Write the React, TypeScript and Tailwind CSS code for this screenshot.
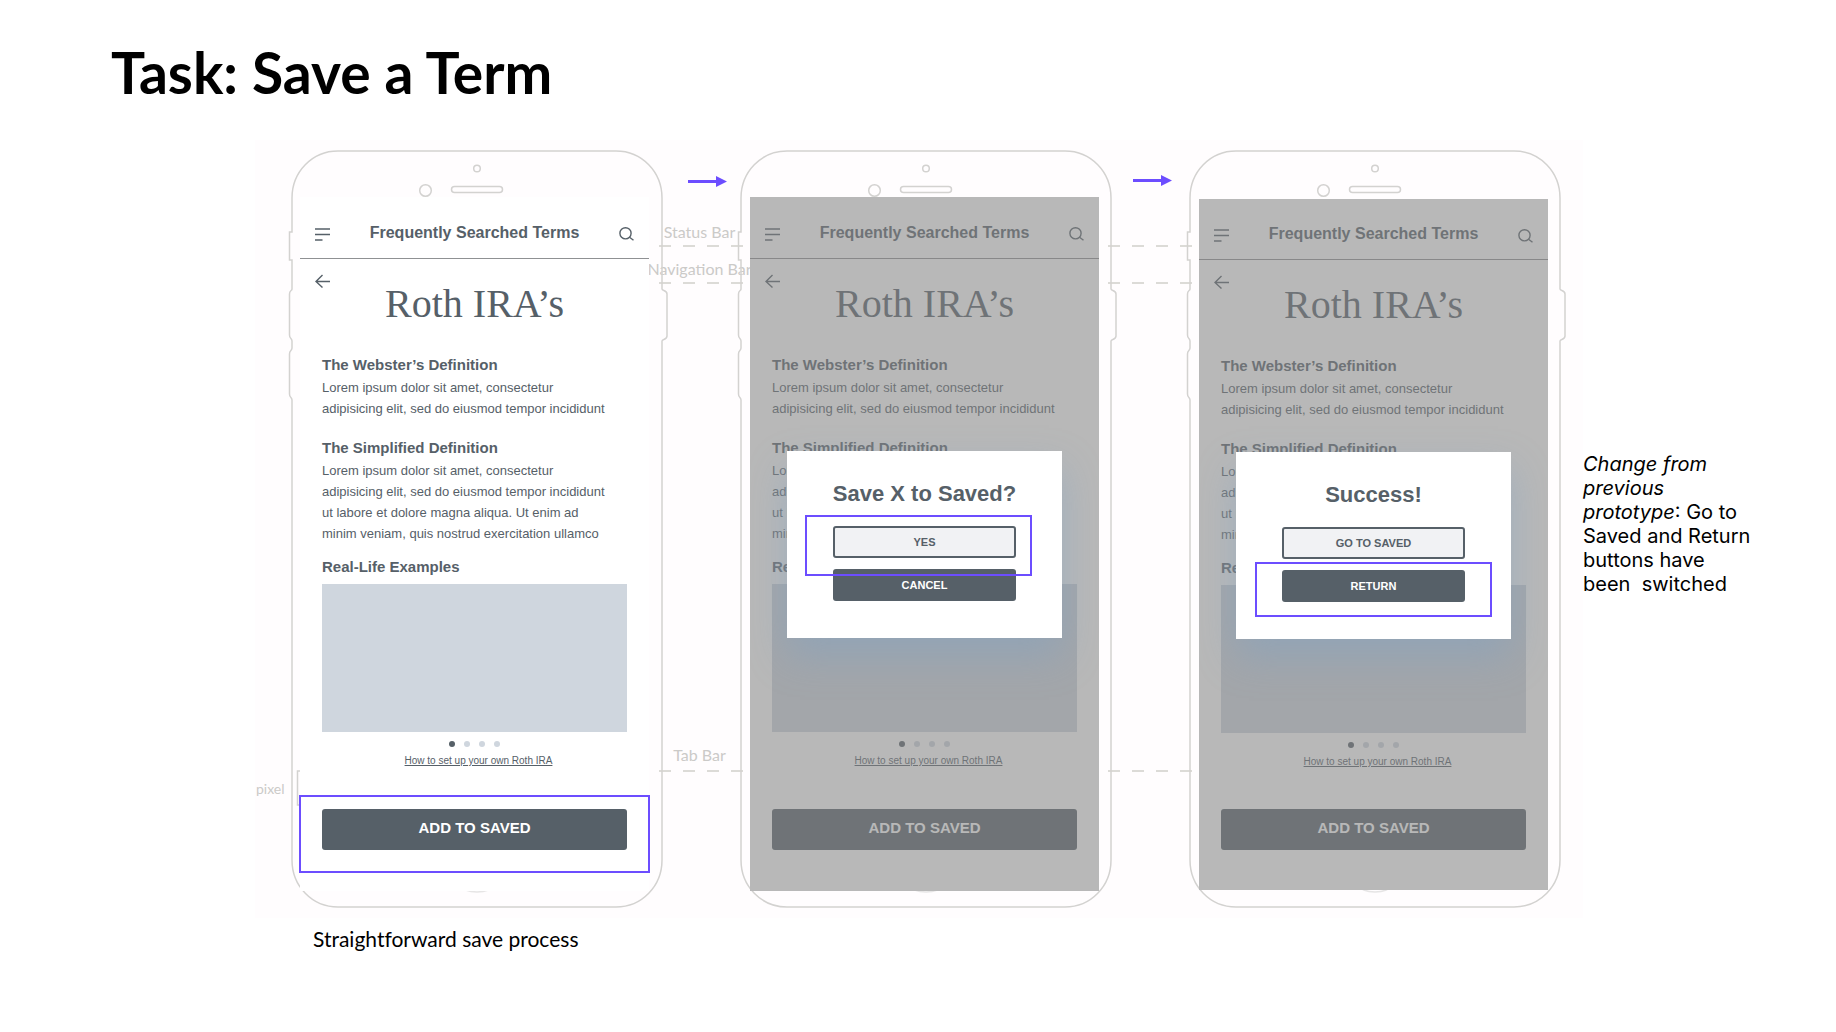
import type { ReactNode } from 'react'
import clsx from 'clsx'

const HIGHLIGHT = 'pointer-events-none absolute border-2 border-[#6c4dff]'

function PhoneFrame({ bracket }: { bracket?: boolean }) {
  return (
    <svg
      className="absolute left-0 top-0 overflow-visible"
      width="372"
      height="758"
      viewBox="0 0 372 758"
      fill="none"
      stroke="#d3d2d0"
      strokeWidth="1.5"
      aria-hidden="true"
    >
      <path d="M47 1H325C351 1 371 22 371 48V139C371 141 376 140 376 144V186C376 190 371 189 371 191V710C371 736 351 757 325 757H47C21 757 1 736 1 710V250C1 247 -1.500 248 -1.500 244V204C-1.500 200 1 201 1 198V191C1 188 -1.500 189 -1.500 185V144C-1.500 140 1 141 1 139V110H-1.500V82H1V48C1 22 21 1 47 1Z" />
      <circle cx="186" cy="18.500" r="3.300" />
      <circle cx="134.500" cy="40.500" r="5.800" />
      <rect x="160.500" y="36.500" width="51" height="6" rx="3" />
      <circle cx="186" cy="712" r="30" stroke="#e6e5e5" />
      {bracket && <path d="M10 621H6.500V655H10" />}
    </svg>
  )
}

function MenuIcon() {
  return (
    <svg width="15" height="13" viewBox="0 0 15 13" stroke="currentColor" strokeWidth="1.400" aria-hidden="true">
      <path d="M0 1H15M0 6.500H15M0 12H7.500" />
    </svg>
  )
}

function SearchIcon() {
  return (
    <svg width="15" height="14" viewBox="0 0 15 14" fill="none" stroke="currentColor" strokeWidth="1.400" aria-hidden="true">
      <circle cx="6.500" cy="6.300" r="5.600" />
      <path d="M10.500 10.300L14.500 13.300" />
    </svg>
  )
}

function BackIcon() {
  return (
    <svg width="15" height="14" viewBox="0 0 15 14" fill="none" stroke="currentColor" strokeWidth="1.400" aria-hidden="true">
      <path d="M15 7.500H1M7.500 1L1 7.500L7.500 13.500" />
    </svg>
  )
}

function ArrowRight() {
  return (
    <svg width="39" height="11" viewBox="0 0 39 11" fill="#6c4dff" aria-hidden="true">
      <path d="M0 4H28V0L39 5.500L28 11V7H0Z" />
    </svg>
  )
}

function SectionTitle({ className, children }: { className?: string; children: ReactNode }) {
  return <h3 className={clsx('text-[15px] leading-5 font-bold', className)}>{children}</h3>
}

function Phone({
  bracket,
  screenClass,
  headerClass,
  overlayClass,
  highlightAdd,
  dialog,
}: {
  bracket?: boolean
  screenClass: string
  headerClass: string
  overlayClass?: string
  highlightAdd?: boolean
  dialog?: ReactNode
}) {
  return (
    <article className="relative h-[758px] w-[372px] shrink-0">
      <PhoneFrame bracket={bracket} />
      <div className={clsx('relative z-10 flex w-[349px] flex-col bg-white text-[#566068]', screenClass)}>
        <header className={clsx('flex items-center justify-between border-b border-[#8f9193] px-[15px] pt-[10px]', headerClass)}>
          <button aria-label="Menu" className="pt-[3px]">
            <MenuIcon />
          </button>
          <span className="text-base leading-5 font-bold">Frequently Searched Terms</span>
          <button aria-label="Search" className="pt-[3px]">
            <SearchIcon />
          </button>
        </header>
        <button aria-label="Back" className="mt-[15px] ml-[15px] self-start">
          <BackIcon />
        </button>
        <div className="flex grow flex-col px-[22px]">
          <h2 className="text-center font-['Liberation_Serif',serif] text-[40px] leading-8">Roth IRA’s</h2>
          <SectionTitle className="mt-[35px]">The Webster’s Definition</SectionTitle>
          <p className="mt-[2px] text-[13px] leading-[21px]">
            Lorem ipsum dolor sit amet, consectetur
            <br />
            adipisicing elit, sed do eiusmod tempor incididunt
          </p>
          <SectionTitle className="mt-[19px]">The Simplified Definition</SectionTitle>
          <p className="mt-[2px] text-[13px] leading-[21px]">
            Lorem ipsum dolor sit amet, consectetur
            <br />
            adipisicing elit, sed do eiusmod tempor incididunt
            <br />
            ut labore et dolore magna aliqua. Ut enim ad
            <br />
            minim veniam, quis nostrud exercitation ullamco
          </p>
          <SectionTitle className="mt-[13px]">Real-Life Examples</SectionTitle>
          <div className="mt-[7px] h-[148px] bg-[#cfd6de]" />
          <div className="mt-[9px] flex justify-center gap-[9px]">
            <span className="size-[6px] rounded-full bg-[#566068]" />
            <span className="size-[6px] rounded-full bg-[#cfd6de]" />
            <span className="size-[6px] rounded-full bg-[#cfd6de]" />
            <span className="size-[6px] rounded-full bg-[#cfd6de]" />
          </div>
          <a href="#roth-ira" className="mt-[7px] ml-2 self-center text-[10px] leading-[14px] underline">
            How to set up your own Roth IRA
          </a>
          <div className="relative mt-auto">
            <button className="h-[41px] w-full rounded-[3px] bg-[#566068] pb-[3px] text-[15px] leading-5 font-bold text-white">
              ADD TO SAVED
            </button>
            {highlightAdd && <span className={clsx(HIGHLIGHT, '-inset-x-[23px] -top-[14px] -bottom-[23px]')} />}
          </div>
        </div>
        {dialog && (
          <div className={clsx('absolute inset-0 flex items-start justify-center overflow-hidden bg-[#828282]/57', overlayClass)}>
            {dialog}
          </div>
        )}
      </div>
    </article>
  )
}

function Dialog({
  title,
  primary,
  secondary,
  primaryMark,
  secondaryMark,
}: {
  title: string
  primary: string
  secondary: string
  primaryMark?: string
  secondaryMark?: string
}) {
  return (
    <div
      role="dialog"
      aria-label={title}
      className="w-[275px] bg-white px-[46px] pt-[31px] pb-[37px] shadow-[0_18px_36px_rgba(120,160,200,0.4)]"
    >
      <h2 className="flex justify-center text-[22px] leading-6 font-bold whitespace-nowrap">{title}</h2>
      <div className="relative z-10 mt-5">
        <button className="h-8 w-full rounded-[3px] border-2 border-[#566068] bg-[#f1f2f4] text-[11px] leading-4 font-bold">
          {primary}
        </button>
        {primaryMark && <span className={clsx(HIGHLIGHT, primaryMark)} />}
      </div>
      <div className="relative mt-[11px]">
        <button className="h-8 w-full rounded-[3px] bg-[#566068] text-[11px] leading-4 font-bold text-white">
          {secondary}
        </button>
        {secondaryMark && <span className={clsx(HIGHLIGHT, secondaryMark)} />}
      </div>
    </div>
  )
}

function Dashes({ className }: { className: string }) {
  return (
    <div
      className={clsx(
        '-mx-1 h-[2px] self-stretch bg-[repeating-linear-gradient(90deg,#dcdbd7_0px,#dcdbd7_12px,transparent_12px,transparent_24px)]',
        className,
      )}
    />
  )
}

// The space between two phones: flow arrow on top, guide lines below it.
function Connector({
  arrowClass,
  status,
  navigation,
  tab,
}: {
  arrowClass: string
  status?: string
  navigation?: string
  tab?: string
}) {
  return (
    <div className="flex min-w-0 flex-1 flex-col items-center font-['Lato',sans-serif] text-[16px] leading-5 whitespace-nowrap text-[#cbcac8]">
      <div className={clsx('h-[37px]', arrowClass)}>
        <ArrowRight />
      </div>
      <div className="mt-[35px] h-5 pr-1">{status}</div>
      <Dashes className="mt-[3px]" />
      <div className="mt-[12px] flex h-5 w-0 justify-center">
        <span className="pr-1">{navigation}</span>
      </div>
      <Dashes className="mt-[3px]" />
      <div className="mt-[461px] h-5 pr-1">{tab}</div>
      <Dashes className="mt-[5px]" />
    </div>
  )
}

export default function App() {
  return (
    <main className="min-h-screen overflow-x-hidden bg-white font-['Liberation_Sans',Arial,sans-serif] text-black">
      <h1 className="pt-[40px] pl-[111px] font-['Lato',sans-serif] text-[57px] leading-[64px] font-bold">
        Task: Save a Term
      </h1>

      <div className="mt-[36px] ml-[255px] flex items-start">
        <section className="flex flex-1 bg-[#fffdfe] py-[10px] pr-[22px]">
          <div className="w-9 shrink-0 pt-[629px] pl-px font-['Lato',sans-serif] text-[14px] leading-5 text-[#cbcac8]">
            pixel
          </div>
          <Phone bracket highlightAdd screenClass="mt-[47px] ml-[9px] h-[694px] pb-[41px]" headerClass="h-[62px]" />
          <Connector arrowClass="pt-[26px] pl-3" status="Status Bar" navigation="Navigation Bar" tab="Tab Bar" />
          <Phone
            screenClass="mt-[47px] ml-[10px] h-[694px] pb-[41px]"
            headerClass="h-[62px]"
            overlayClass="pt-[254px]"
            dialog={
              <Dialog
                title="Save X to Saved?"
                primary="YES"
                secondary="CANCEL"
                primaryMark="-left-[28px] -right-[16px] -top-[11px] -bottom-[18px]"
              />
            }
          />
          <Connector arrowClass="pt-[25px] pl-1" />
          <Phone
            screenClass="mt-[49px] ml-[10px] h-[691px] pb-[40px]"
            headerClass="h-[61px]"
            overlayClass="pt-[253px]"
            dialog={
              <Dialog
                title="Success!"
                primary="GO TO SAVED"
                secondary="RETURN"
                secondaryMark="-inset-x-[27px] -top-[8px] -bottom-[15px]"
              />
            }
          />
        </section>

        <aside className="mt-[312px] w-[253px] shrink-0 font-['Inter',sans-serif] text-[20px] leading-6 whitespace-pre">
          <em>Change from</em>
          <br />
          <em>previous</em>
          <br />
          <em>prototype</em>: Go to
          <br />
          Saved and Return
          <br />
          buttons have
          <br />
          {'been  switched'}
        </aside>
      </div>

      <p className="mt-[6px] pl-[313px] font-['Lato',sans-serif] text-[21px] leading-[30px] [font-variant-ligatures:none]">
        Straightforward save process
      </p>
    </main>
  )
}
